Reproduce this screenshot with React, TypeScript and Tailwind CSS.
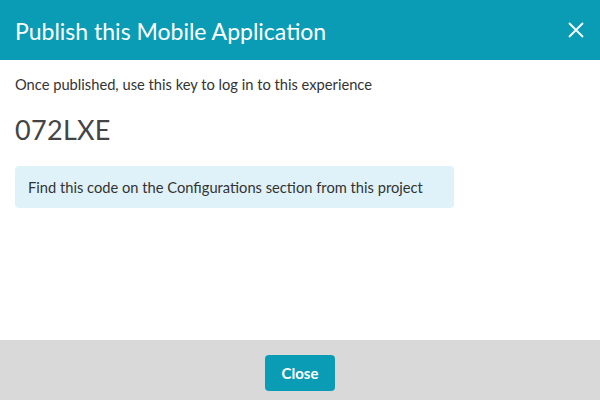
export default function App() {
  return (
    <div className="w-[600px] h-[400px] flex flex-col bg-white font-['Lato','Noto_Sans',sans-serif]">
      <div className="h-[60px] bg-[#0a9cb5] flex items-center justify-between pl-[15px] pr-[16px]">
        <h1 className="text-white text-[23px] leading-none pt-[2px]">Publish this Mobile Application</h1>
        <button className="text-white">
          <svg width="16" height="16" viewBox="0 0 16 16" fill="none" stroke="currentColor" strokeWidth="1.8">
            <path d="M1 1L15 15M15 1L1 15" />
          </svg>
        </button>
      </div>
      <div className="flex-1 px-[15px] pt-[14px]">
        <p className="text-[14.7px] text-[#333] leading-[20px]">Once published, use this key to log in to this experience</p>
        <div className="mt-[20px] text-[27px] tracking-[0.3px] text-[#444] leading-[32px]">072LXE</div>
        <div className="mt-[20px] w-[439px] h-[42px] rounded-[4px] bg-[#dff2fa] flex items-center px-[13px] text-[14.7px] text-[#333]">
          Find this code on the Configurations section from this project
        </div>
      </div>
      <div className="h-[60px] bg-[#d9d9d9] flex justify-center pt-[15px]">
        <button className="w-[70px] h-[36px] rounded-[4px] bg-[#0a9cb5] text-white text-[15px] font-bold">Close</button>
      </div>
    </div>
  );
}
